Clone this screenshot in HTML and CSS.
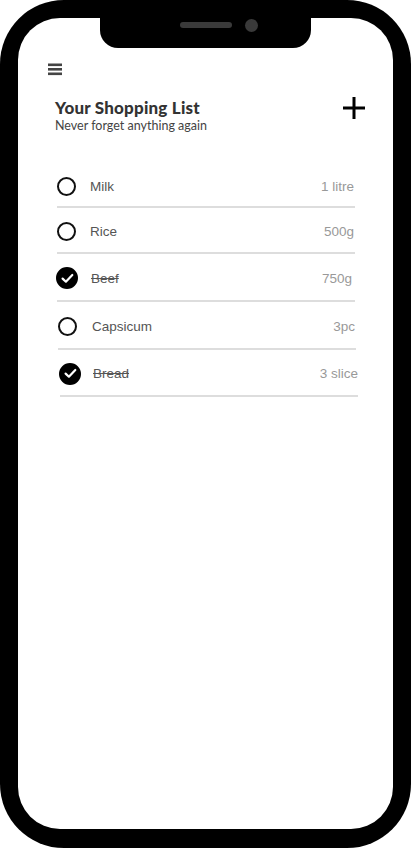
FILE: index.html
```html
<!DOCTYPE html>
<html lang="en">
<head>
<meta charset="utf-8">
<title>Your Shopping List</title>
<link rel="stylesheet" href="styles.css">
</head>
<body>
<div class="phone">
  <div class="screen">
    <div class="notch">
      <span class="speaker"></span>
      <span class="camera"></span>
    </div>
    <div class="topbar">
      <svg class="menu" width="14" height="13" viewBox="0 0 14 13">
        <rect x="0" y="0.5" width="14" height="2.6" fill="#444"/>
        <rect x="0" y="5" width="14" height="2.6" fill="#444"/>
        <rect x="0" y="9.5" width="14" height="2.6" fill="#444"/>
      </svg>
    </div>
    <div class="header">
      <div class="titles">
        <h1 class="title">Your Shopping List</h1>
        <p class="subtitle">Never forget anything again</p>
      </div>
      <svg class="plus" width="22" height="22" viewBox="0 0 22 22">
        <rect x="9.5" y="0" width="3" height="22" fill="#000"/>
        <rect x="0" y="9.5" width="22" height="3" fill="#000"/>
      </svg>
    </div>
    <ul class="list">
      <li class="item">
        <span class="check"></span>
        <span class="name">Milk</span>
        <span class="qty">1 litre</span>
      </li>
      <li class="item">
        <span class="check"></span>
        <span class="name">Rice</span>
        <span class="qty">500g</span>
      </li>
      <li class="item done">
        <span class="check"><svg width="13" height="11" viewBox="0 0 13 11"><path d="M1.6 5.6 L4.9 8.7 L11.3 2" fill="none" stroke="#fff" stroke-width="2.2" stroke-linecap="round" stroke-linejoin="round"/></svg></span>
        <span class="name">Beef</span>
        <span class="qty">750g</span>
      </li>
      <li class="item shift1">
        <span class="check"></span>
        <span class="name">Capsicum</span>
        <span class="qty">3pc</span>
      </li>
      <li class="item done shift2">
        <span class="check"><svg width="13" height="11" viewBox="0 0 13 11"><path d="M1.6 5.6 L4.9 8.7 L11.3 2" fill="none" stroke="#fff" stroke-width="2.2" stroke-linecap="round" stroke-linejoin="round"/></svg></span>
        <span class="name">Bread</span>
        <span class="qty">3 slice</span>
      </li>
    </ul>
  </div>
</div>
</body>
</html>
```

FILE: styles.css
```css
* { box-sizing: border-box; }
html, body {
  margin: 0;
  padding: 0;
  background: #fff;
}
body {
  width: 411px;
  height: 848px;
  overflow: hidden;
}
.phone {
  width: 411px;
  height: 848px;
  background: #000;
  border-radius: 64px;
  padding: 18px 18px 19px 18px;
}
.screen {
  position: relative;
  width: 100%;
  height: 100%;
  background: #fff;
  border-radius: 42px;
  overflow: hidden;
}
.notch {
  position: absolute;
  top: 0;
  left: 82px;
  width: 211px;
  height: 30px;
  background: #000;
  border-radius: 0 0 18px 18px;
}
.speaker {
  position: absolute;
  left: 80px;
  top: 4px;
  width: 52px;
  height: 6px;
  border-radius: 3px;
  background: #3a3a3a;
}
.camera {
  position: absolute;
  left: 145px;
  top: 1px;
  width: 13px;
  height: 13px;
  border-radius: 50%;
  background: #3a3a3a;
}
.topbar {
  padding: 45px 0 0 30px;
  height: 58px;
}
.menu { display: block; }
.header {
  display: flex;
  justify-content: space-between;
  align-items: flex-start;
  padding: 21px 28px 0 37px;
}
.title {
  margin: 0;
  font-family: Lato, "Noto Sans", sans-serif;
  font-weight: 900;
  font-size: 17px;
  line-height: 22px;
  color: #333;
  letter-spacing: 0.2px;
}
.subtitle {
  margin: 0;
  font-family: Lato, "Noto Sans", sans-serif;
  font-size: 12.5px;
  line-height: 14px;
  color: #444;
}
.plus {
  display: block;
  margin-top: 0;
}
.list {
  list-style: none;
  margin: 0;
  padding: 31px 38px 0 39px;
}
.item {
  display: flex;
  align-items: center;
  height: 48px;
  padding-top: 2px;
  border-bottom: 2px solid #ddd;
  font-family: "Liberation Sans", Arial, sans-serif;
  font-size: 13.5px;
}
.item:first-child { height: 44px; }
.item:nth-child(2) { height: 46px; }
.item:nth-child(5) { height: 47px; }
.check {
  width: 19px;
  height: 19px;
  border: 2px solid #111;
  border-radius: 50%;
  flex-shrink: 0;
  display: flex;
  align-items: center;
  justify-content: center;
}
.done .check {
  width: 22px;
  height: 22px;
  margin-left: -1px;
  background: #000;
  border-color: #000;
}
.name {
  margin-left: 14px;
  color: #555;
  flex: 1;
}
.done .name {
  margin-left: 13px;
  text-decoration: line-through;
}
.qty {
  color: #999;
  margin-right: 1px;
}
.done .qty { margin-right: 3px; }
.shift1 { margin-left: 1px; margin-right: -1px; }
.shift1 .name { margin-left: 15px; }
.shift2 { margin-left: 3px; margin-right: -3px; }
.shift2 .name { margin-left: 12px; }
.shift2 .qty { margin-right: 0; }
```
